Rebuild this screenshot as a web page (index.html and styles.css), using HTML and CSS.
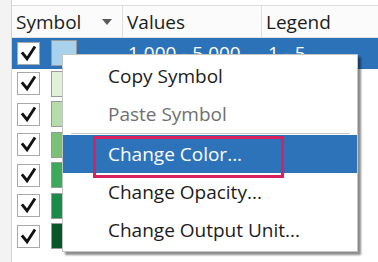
FILE: index.html
```html
<!DOCTYPE html>
<html lang="en">
<head>
  <meta charset="UTF-8" />
  <title>Symbology</title>
  <link rel="stylesheet" href="styles.css">
</head>
<body>

  <div class="app">
    <div class="gutter"></div>

    <div class="grid">
      <div class="head">
        <div class="col sym">Symbol <span class="arrow"></span></div>
        <div class="col val">Values</div>
        <div class="col leg">Legend</div>
      </div>

      <!-- class breaks -->
      <div class="row sel">
        <span class="check"><svg viewBox="0 0 22 22"><path d="M5 11 L9.5 16.5 L17 5"/></svg></span>
        <span class="swatch c1"></span>
        <span class="txt val">1,000 - 5,000</span>
        <span class="txt leg">1 - 5</span>
      </div>
      <div class="row">
        <span class="check"><svg viewBox="0 0 22 22"><path d="M5 11 L9.5 16.5 L17 5"/></svg></span>
        <span class="swatch c2"></span>
      </div>
      <div class="row">
        <span class="check"><svg viewBox="0 0 22 22"><path d="M5 11 L9.5 16.5 L17 5"/></svg></span>
        <span class="swatch c3"></span>
      </div>
      <div class="row">
        <span class="check"><svg viewBox="0 0 22 22"><path d="M5 11 L9.5 16.5 L17 5"/></svg></span>
        <span class="swatch c4"></span>
      </div>
      <div class="row">
        <span class="check"><svg viewBox="0 0 22 22"><path d="M5 11 L9.5 16.5 L17 5"/></svg></span>
        <span class="swatch c5"></span>
      </div>
      <div class="row">
        <span class="check"><svg viewBox="0 0 22 22"><path d="M5 11 L9.5 16.5 L17 5"/></svg></span>
        <span class="swatch c6"></span>
      </div>
      <div class="row">
        <span class="check"><svg viewBox="0 0 22 22"><path d="M5 11 L9.5 16.5 L17 5"/></svg></span>
        <span class="swatch c7"></span>
      </div>
    </div>

    <!-- context menu -->
    <ul class="menu">
      <li>Copy Symbol</li>
      <li class="disabled">Paste Symbol</li>
      <li class="sep"></li>
      <li class="active"><span class="mark"></span>Change Color...</li>
      <li>Change Opacity...</li>
      <li>Change Output Unit...</li>
    </ul>
  </div>

</body>
</html>
```

FILE: styles.css
```css
body {
  margin: 0;
  background: #fff;
  font-family: 'Open Sans', 'Noto Sans', sans-serif;
  color: #1c1c1c;
}

.app {
  position: relative;
  display: flex;
  width: 378px;
  height: 262px;
  overflow: hidden;
}

.gutter {
  width: 11px;
  background: #f3f3f3;
  border-right: 1px solid #d2d2d2;
}

.grid {
  flex: 1;
  margin-top: 5px;
  border-top: 1px solid #dcdcdc;
}

.head {
  display: flex;
  height: 31px;
  background: #fbfbfb;
  border-bottom: 1px solid #e2e2e2;
  font-size: 19px;
}

.col {
  display: flex;
  align-items: center;
  padding-left: 4px;
  border-right: 1px solid #dedede;
}

.col.sym {
  width: 106px;
  justify-content: space-between;
  padding-right: 0;
}

.col.val {
  width: 134px;
}

.col.leg {
  flex: 1;
  border-right: none;
}

.arrow {
  width: 0;
  height: 0;
  margin-right: 10px;
  border-left: 5px solid transparent;
  border-right: 5px solid transparent;
  border-top: 6px solid #5a5a5a;
}

.row {
  display: flex;
  align-items: center;
  height: 30.5px;
  padding-left: 5px;
  font-size: 19px;
}

.row.sel {
  background: #2b72b9;
  color: #fff;
}

.check {
  width: 21px;
  height: 21px;
  background: #fff;
  border: 1px solid #a9a9a9;
}

.check svg {
  width: 21px;
  height: 21px;
}

.check path {
  fill: none;
  stroke: #111;
  stroke-width: 3;
  stroke-linecap: square;
}

.swatch {
  width: 24px;
  height: 24px;
  margin-left: 11px;
  border: 1px solid #9a9a9a;
}

.c1 { background: #a8d2ec; }
.c2 { background: #e1f1d9; }
.c3 { background: #b7dcab; }
.c4 { background: #79c177; }
.c5 { background: #3ea95a; }
.c6 { background: #1b8b48; }
.c7 { background: #0a552a; }

.txt.val {
  margin-left: 51px;
  width: 140px;
}

.menu {
  position: absolute;
  left: 62px;
  top: 54px;
  width: 294px;
  margin: 0;
  padding: 2px 0;
  list-style: none;
  background: #fff;
  border: 1px solid #c4c4c4;
  box-shadow: 3px 3px 2px rgba(0, 0, 0, 0.45);
  font-size: 19px;
}

.menu li {
  position: relative;
  height: 38px;
  line-height: 38px;
  padding-left: 45px;
}

.menu li.disabled {
  color: #707070;
}

.menu li.sep {
  height: 1px;
  margin: 0 7px 1px 8px;
  padding: 0;
  background: #c6c6c6;
}

.menu li.active {
  background: #2d73ba;
  color: #fff;
}

.mark {
  position: absolute;
  left: 30px;
  top: 1px;
  width: 185px;
  height: 36px;
  border: 3px solid #d9215f;
}
```
